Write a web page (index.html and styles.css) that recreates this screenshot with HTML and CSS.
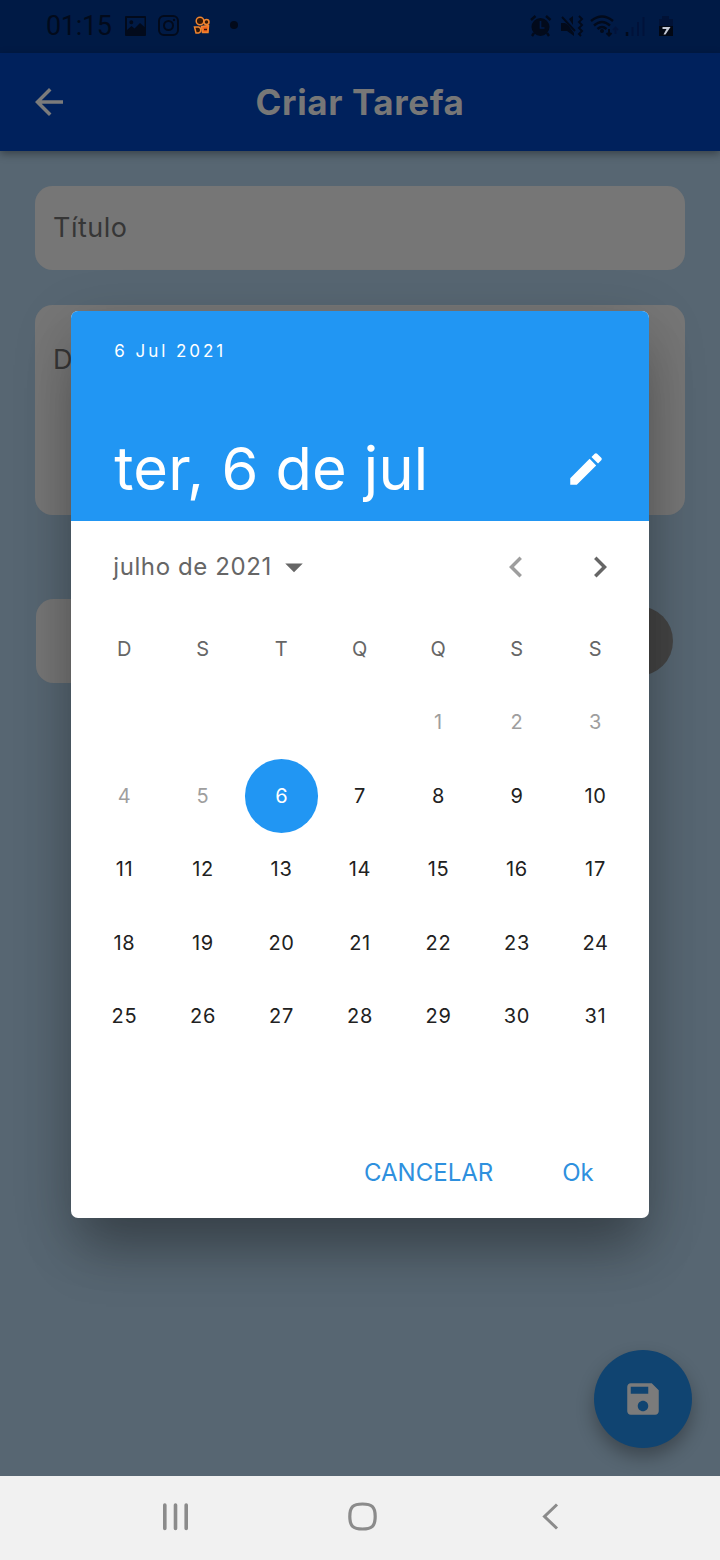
FILE: index.html
```html
<!DOCTYPE html>
<html lang="pt-BR">
<head>
<meta charset="utf-8">
<title>Criar Tarefa</title>
<link rel="stylesheet" href="styles.css">
</head>
<body>
<div class="screen">
  <header class="status">
    <span class="clock">01:15</span>
    <svg class="status-left" width="120" height="24" viewBox="0 0 120 24">
      <path fill="#020a1b" fill-rule="evenodd" d="M2 2h19q1 0 1 1v18q0 1-1 1H2q-1 0-1-1V3q0-1 1-1zM3 4v12l4.500-4 3 2.500 5.500-5.500 4.500 4V4zM7.300 6.200a2 2 0 1 1 0 4 2 2 0 0 1 0-4z"/>
      <g fill="none" stroke="#020a1b" stroke-width="2"><rect x="35" y="2" width="19" height="19" rx="5"/><circle cx="44.500" cy="11.500" r="4.500"/></g>
      <circle cx="50" cy="6" r="1.200" fill="#020a1b"/>
      <g transform="translate(0 1)" fill="#331706" stroke="#f0852f" stroke-width="1.500"><path d="M77.500 11.500l7-1-.5 7h-5.500z" fill="#f0621f"/><circle cx="76" cy="6" r="3.800"/><circle cx="82.500" cy="7" r="2.500"/><path d="M70.500 12h4q2.300.3 2.300 3t-2.300 3h-2.500z"/><path d="M80 14.500h3" stroke="#331706"/></g>
      <circle cx="110" cy="11" r="4" fill="#020a1b"/>
    </svg>
    <svg class="status-right" width="150" height="24" viewBox="0 0 150 24">
      <g fill="none" stroke="#020a1b" stroke-width="2.400"><path d="M1 6l4.500-4M16 2l4.500 4M4 19l-2 3M17 19l2 3"/></g>
      <circle cx="10.500" cy="13" r="9" fill="#020a1b"/><path d="M10.500 7v7h4" fill="none" stroke="#001a47" stroke-width="1.700"/>
      <path fill="#020a1b" d="M31 9h4l3 2 6 8v3l-7-5h-6zM39 5l4-3v9z"/>
      <path d="M32 3l13 14M49 2l3 3-3 3 3 3-3 3 3 3-3 3 2 2" fill="none" stroke="#020a1b" stroke-width="1.900"/>
      <g fill="none" stroke="#020a1b" stroke-width="2.400"><path d="M61 7q11-9 22 0M64 11.500q8-7 16 0M67.500 15q4.500-4 9 0"/></g>
      <circle cx="72" cy="17" r="2" fill="#020a1b"/><path d="M79 15v6M76.500 19l2.500 2.500 2.500-2.500" fill="none" stroke="#020a1b" stroke-width="2"/>
      <path d="M85.500 20v-6M83 16l2.500-2.500L88 16" fill="none" stroke="#02133a" stroke-width="1.700"/>
      <path d="M97 18v4" stroke="#020a1b" stroke-width="2.500"/><path d="M102.500 13v9M108 8v14M113.500 3v19" stroke="#01123a" stroke-width="2"/>
      <path fill="#011236" d="M129 5h3V2h7v3h4v8h-14z"/><path fill="#020713" d="M129 12h14v10h-14z"/><path fill="#c4c8d4" d="M132.500 13h8l-5 7.500h-2l3-5.500h-4z"/>
    </svg>
  </header>
  <div class="appbar">
    <svg class="back" width="42" height="42" viewBox="0 0 24 24"><path d="M20 11H7.830l5.590-5.590L12 4l-8 8 8 8 1.410-1.410L7.830 13H20v-2z"/></svg>
    <h1 class="title">Criar Tarefa</h1>
  </div>
  <main class="form">
    <div class="field">Título</div>
    <div class="field area">D</div>
    <div class="row"><div class="field date"></div><div class="round"></div></div>
    <div class="fab"><svg width="42" height="42" viewBox="0 0 24 24"><path fill="#7b7b7b" d="M17 3H5c-1.110 0-2 .9-2 2v14c0 1.100.89 2 2 2h14c1.100 0 2-.9 2-2V7l-4-4zm-5 16c-1.660 0-3-1.340-3-3s1.340-3 3-3 3 1.340 3 3-1.340 3-3 3zm3-10H5V5h10v4z"/></svg></div>
  </main>
  <nav class="navbar">
    <svg width="720" height="84" viewBox="0 0 720 84" fill="none" stroke="#8b8b8b" stroke-linecap="round"><path stroke-width="3.600" d="M164.800 29v23.500M175.500 29v23.500M186.200 29v23.500"/><path stroke-width="3.200" d="M362.500 28c9.500 0 12.700 3 12.700 12.500S372 53 362.500 53s-12.700-3-12.700-12.500S353 28 362.500 28z"/><path stroke-width="3" stroke-linecap="butt" d="M557 28.500l-12.500 12 12.500 12"/></svg>
  </nav>
  <section class="dialog">
    <div class="head">
      <div class="overline">6 Jul 2021</div>
      <div class="headline"><span>ter, 6 de jul</span><svg class="edit" width="42" height="42" viewBox="0 0 24 24"><path fill="#fff" d="M3 17.250V21h3.750L17.810 9.940l-3.750-3.750L3 17.250zM20.710 7.040c.39-.39.39-1.020 0-1.410l-2.340-2.340c-.39-.39-1.020-.39-1.410 0l-1.830 1.830 3.750 3.750 1.830-1.830z"/></svg></div>
    </div>
    <div class="month">
      <span>julho de 2021</span>
      <svg class="drop" width="42" height="42" viewBox="0 0 24 24"><path fill="#666" d="M7 10l5 5 5-5z"/></svg>
      <svg class="prev" width="42" height="42" viewBox="0 0 24 24"><path fill="#9e9e9e" d="M15.410 7.410L14 6l-6 6 6 6 1.410-1.410L10.830 12z"/></svg>
      <svg class="next" width="42" height="42" viewBox="0 0 24 24"><path fill="#666" d="M10 6L8.590 7.410 13.170 12l-4.580 4.590L10 18l6-6z"/></svg>
    </div>
    <div class="grid">
      <span class="wd">D</span><span class="wd">S</span><span class="wd">T</span><span class="wd">Q</span><span class="wd">Q</span><span class="wd">S</span><span class="wd">S</span>
      <span></span><span></span><span></span><span></span><span class="off">1</span><span class="off">2</span><span class="off">3</span>
      <span class="off">4</span><span class="off">5</span><span class="sel"><b>6</b></span><span>7</span><span>8</span><span>9</span><span>10</span>
      <span>11</span><span>12</span><span>13</span><span>14</span><span>15</span><span>16</span><span>17</span>
      <span>18</span><span>19</span><span>20</span><span>21</span><span>22</span><span>23</span><span>24</span>
      <span>25</span><span>26</span><span>27</span><span>28</span><span>29</span><span>30</span><span>31</span>
    </div>
    <div class="actions"><span>CANCELAR</span><span>Ok</span></div>
  </section>
</div>
</body>
</html>
```
FILE: styles.css
```css
* { box-sizing: border-box; }
body { margin: 0; font-family: Inter, "Liberation Sans", sans-serif; }
svg { display: block; flex: none; }
.screen { position: relative; width: 720px; height: 1560px; display: flex; flex-direction: column; overflow: hidden; background: #576672; }
.status { height: 53px; flex: none; display: flex; align-items: center; background: #001a45; padding-left: 46px; }
.clock { font: 27px/53px Roboto, sans-serif; letter-spacing: -0.3px; color: #020a1b; width: 78px; white-space: nowrap; }
.status-left { margin-top: -1px; }
.status-right { margin: -1px 0 0 286px; }
.appbar { position: relative; z-index: 1; height: 98px; flex: none; display: flex; align-items: center; background: #00215c; box-shadow: 0 3px 8px rgba(0,0,0,.35); }
.back { margin-left: 28px; fill: #7b7b7b; }
.title { margin: 0; flex: 1; padding-right: 70px; text-align: center; font-size: 35px; font-weight: 700; line-height: 42px; letter-spacing: .6px; color: #777; }
.form { flex: 1; padding: 35px 35px 28px; display: flex; flex-direction: column; }
.field { height: 84px; flex: none; border-radius: 17.500px; background: #767676; padding: 0 18px; font-size: 27px; line-height: 84px; letter-spacing: .5px; color: #363636; }
.area { height: 210px; margin-top: 35px; line-height: 110px; }
.row { display: flex; align-items: center; justify-content: space-between; margin-top: 84px; padding: 0 12px 0 1px; }
.date { width: 500px; }
.round { width: 70px; height: 70px; border-radius: 50%; background: #444; }
.fab { width: 98px; height: 98px; margin: auto -7px 0 auto; border-radius: 50%; background: #104471; box-shadow: 0 9px 18px rgba(0,0,0,.3); display: flex; align-items: center; justify-content: center; }
.navbar { position: relative; height: 84px; flex: none; background: #f1f1f1; }
.dialog { position: absolute; left: 71.250px; top: 311px; width: 577.500px; height: 906.500px; border-radius: 7px; overflow: hidden; background: #fff; display: flex; flex-direction: column; box-shadow: 0 42px 50px -10px rgba(0,0,0,.25), 0 16px 60px 0 rgba(0,0,0,.18); }
.head { height: 210px; flex: none; background: #2196f3; color: #fff; padding: 28px 35px 0 43px; display: flex; flex-direction: column; }
.overline { font-size: 17px; line-height: 24px; letter-spacing: 2.950px; }
.headline { margin-top: 70px; display: flex; align-items: center; justify-content: space-between; font-size: 59.500px; line-height: 70px; letter-spacing: .2px; padding-right: 7px; }
.edit { margin-top: 2px; }
.month { height: 91px; flex: none; display: flex; align-items: center; padding-left: 42px; font-size: 24px; color: #666; letter-spacing: .6px; }
.drop { margin-left: 1px; }
.prev { margin-left: auto; }
.next { margin: 0 28px 0 42px; }
.grid { display: grid; grid-template-columns: repeat(7, 78.500px); grid-auto-rows: 73.500px; padding: 0 14px; font-size: 20px; letter-spacing: .7px; color: #212121; }
.grid span { display: flex; align-items: center; justify-content: center; }
.grid .wd { color: #666; }
.grid .off { color: #9e9e9e; }
.grid .sel { letter-spacing: 0; }
.sel b { width: 73.500px; height: 73.500px; border-radius: 50%; background: #2196f3; color: #fff; font-weight: 400; display: flex; align-items: center; justify-content: center; }
.actions { height: 91px; margin-top: auto; display: flex; align-items: center; justify-content: flex-end; gap: 69px; padding-right: 55px; font-size: 24px; color: #2e90de; }
```
